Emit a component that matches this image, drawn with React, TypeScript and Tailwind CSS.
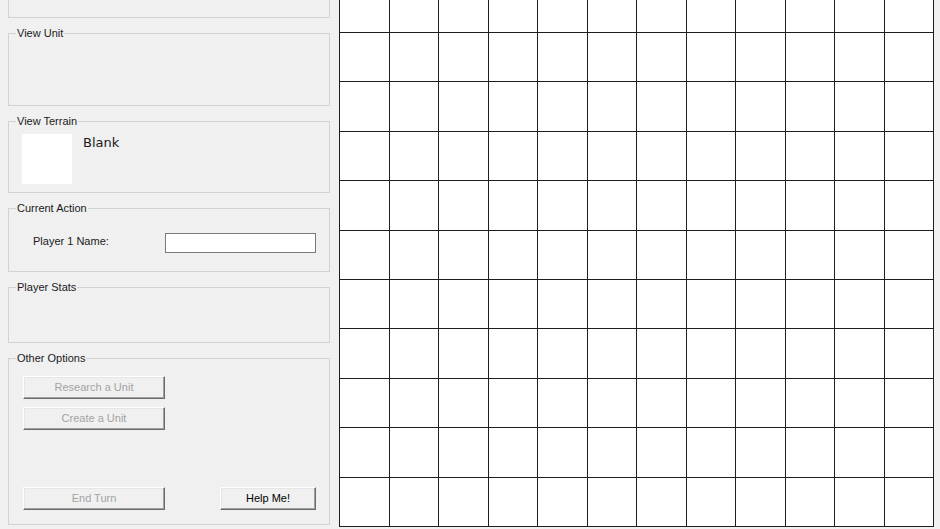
import type { ReactNode } from "react";

const FONT = "font-['Liberation_Sans',Arial,sans-serif]";

function GroupBox({
  title,
  className,
  children,
}: {
  title?: string;
  className: string;
  children?: ReactNode;
}) {
  return (
    <div className={`relative ml-[8px] w-[322px] border border-[#d3d3d3] ${className}`}>
      {title ? (
        <span className="absolute left-[7px] top-[-7px] bg-[#f0f0f0] px-[1px] text-[11px] leading-[13px] text-[#1a1a1a]">
          {title}
        </span>
      ) : null}
      {children}
    </div>
  );
}

function WinButton({
  label,
  disabled,
  className,
}: {
  label: string;
  disabled?: boolean;
  className: string;
}) {
  return (
    <button
      type="button"
      className={`h-[23px] border border-t-white border-l-white border-r-[#6b6b6b] border-b-[#6b6b6b] bg-[#f0f0f0] text-[11px] leading-none shadow-[inset_-1px_-1px_0_#a0a0a0,inset_1px_1px_0_#e6e6e6] ${
        disabled ? "text-[#a3a3a3]" : "text-black"
      } ${className}`}
    >
      {label}
    </button>
  );
}

export default function App() {
  const cells = Array.from({ length: 12 * 11 }, (_, i) => i);

  return (
    <div className={`flex h-[529px] w-[940px] overflow-hidden bg-[#f0f0f0] ${FONT}`}>
      {/* left side panel */}
      <div className="flex w-[339px] shrink-0 flex-col gap-[15px]">
        <GroupBox className="mt-[-22px] h-[40px]" />

        <GroupBox title="View Unit" className="h-[73px]" />

        <GroupBox title="View Terrain" className="h-[72px]">
          <div className="flex items-start pl-[13px] pt-[12px]">
            <div className="h-[50px] w-[50px] bg-white" />
            <span className="ml-[11px] mt-[1px] font-['DejaVu_Sans',sans-serif] text-[13px] leading-[16px] text-[#1a1a1a]">
              Blank
            </span>
          </div>
        </GroupBox>

        <GroupBox title="Current Action" className="h-[64px]">
          <div className="flex items-center pl-[24px] pt-[24px]">
            <span className="mb-[3px] w-[132px] text-[11px] leading-[13px] text-[#1a1a1a]">
              Player 1 Name:
            </span>
            <input
              className="h-[20px] w-[151px] border border-[#7a7a7a] bg-white px-1 text-[11px] outline-none"
              readOnly
            />
          </div>
        </GroupBox>

        <GroupBox title="Player Stats" className="h-[56px]" />

        <GroupBox title="Other Options" className="h-[167px]">
          <div className="flex h-full flex-col pl-[14px] pr-[13px] pt-[17px] pb-[14px]">
            <WinButton label="Research a Unit" disabled className="w-[142px]" />
            <WinButton label="Create a Unit" disabled className="mt-[8px] w-[142px]" />
            <div className="mt-auto flex items-center justify-between">
              <WinButton label="End Turn" disabled className="w-[142px]" />
              <WinButton label="Help Me!" className="w-[96px]" />
            </div>
          </div>
        </GroupBox>
      </div>

      {/* map grid, scrolled a little */}
      <div className="h-[527px] w-[595px] shrink-0 overflow-hidden">
        <div className="mt-[-16.4px] grid grid-cols-12 auto-rows-[49.4px] border-l border-[#1e1e1e] bg-white">
          {cells.map((i) => (
            <div key={i} className="border-r border-b border-[#1e1e1e]" />
          ))}
        </div>
      </div>
    </div>
  );
}
